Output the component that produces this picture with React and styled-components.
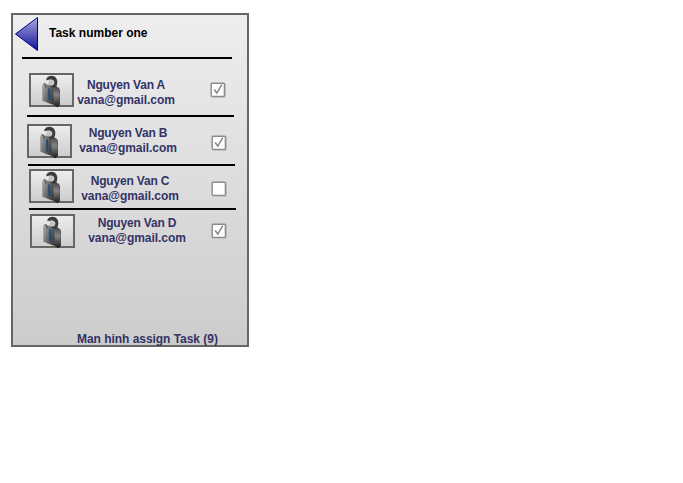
import React from "react";
import styled, { createGlobalStyle } from "styled-components";

const GlobalStyle = createGlobalStyle`
  body { margin: 0; background: #fff; }
  * { box-sizing: border-box; }
`;

const Panel = styled.main`
  display: flex;
  flex-direction: column;
  width: 238px;
  height: 334px;
  margin: 13px 0 0 11px;
  border: 2px solid #666;
  background: linear-gradient(#eee, #ccc);
  font: bold 12px/15px "Liberation Sans", Arial, sans-serif;
  color: #333366;
  white-space: nowrap;
`;

const Header = styled.header`
  display: flex;
  width: 210px;
  height: 44px;
  margin-left: 9px;
  border-bottom: 2px solid #000;
`;

const BackButton = styled.button`
  width: 25px;
  height: 36px;
  margin: 1px 0 0 -8px;
  padding: 0;
  border: 0;
  background: none;
  svg { display: block; }
`;

const Title = styled.h1`
  margin: 11px 0 0 10px;
  font: inherit;
  color: #000;
`;

const Row = styled.section`
  display: flex;
  align-items: flex-start;
  width: 207px;
  height: ${(p) => p.$height}px;
  margin-left: ${(p) => p.$indent}px;
  border-bottom: ${(p) => (p.$last ? "0" : "2px solid #000")};
`;

const Avatar = styled.div`
  flex: none;
  width: 45px;
  height: 34px;
  margin: ${(p) => p.$top}px 0 0 ${(p) => p.$left}px;
  svg { display: block; overflow: visible; }
`;

const Contact = styled.div`
  flex: none;
  width: 98px;
  margin: ${(p) => p.$top}px 0 0 ${(p) => p.$left}px;
  text-align: center;
`;

const Name = styled.div`
  letter-spacing: -0.18px;
`;

const Email = styled.div`
  letter-spacing: -0.05px;
`;

const CheckBox = styled.div`
  flex: none;
  width: 16px;
  height: 16px;
  margin: ${(p) => p.$top}px 0 0 ${(p) => p.$left}px;
  svg { display: block; }
`;

const Footer = styled.footer`
  margin: auto 0 -2px 64px;
  letter-spacing: -0.04px;
`;

const people = [
  { name: "Nguyen Van A", indent: 14, height: 58, avatar: [14, 2], text: [19, 3], check: [23, 35], checked: true },
  { name: "Nguyen Van B", indent: 15, height: 49, avatar: [7, -1], text: [9, 7], check: [18, 34], checked: true },
  { name: "Nguyen Van C", indent: 16, height: 44, avatar: [3, 0], text: [8, 7], check: [15, 32], checked: false },
  { name: "Nguyen Van D", indent: 16, height: 45, avatar: [4, 1], text: [6, 13], check: [13, 25], checked: true },
];

function Person({ id }) {
  return (
    <svg width="45" height="34" viewBox="0 0 45 34">
      <defs>
        <linearGradient id={`frame-${id}`} x1="0" y1="0" x2="0" y2="1">
          <stop offset="0" stopColor="#eee" />
          <stop offset="1" stopColor="#ccc" />
        </linearGradient>
        <linearGradient id={`jacket-${id}`} x1="0" y1="0.3" x2="1" y2="0.7">
          <stop offset="0" stopColor="#a2a2a2" />
          <stop offset="0.3" stopColor="#707070" />
          <stop offset="0.6" stopColor="#454545" />
          <stop offset="1" stopColor="#303030" />
        </linearGradient>
        <linearGradient id={`sleeve-${id}`} x1="0" y1="0" x2="0" y2="1">
          <stop offset="0" stopColor="#484848" />
          <stop offset="0.4" stopColor="#858585" />
          <stop offset="1" stopColor="#181818" />
        </linearGradient>
      </defs>
      <rect x="1" y="1" width="43" height="32" fill={`url(#frame-${id})`} stroke="#666" strokeWidth="2" />
      <path d="M20 7 L24 7.5 L25 11 L23 14 L19 13Z" fill="#c2c2c2" />
      <path d="M13 13.5 L14 10.5 L16 10 L18 11.5 L20.5 12.3 L26 13 L30 15 L31 18 L31 31.5 L28.5 34.3 L25 32 L19 30 L13 27.5Z" fill={`url(#jacket-${id})`} />
      <path d="M24 14 L27 13.5 L30.5 16 L31 31.5 L28.5 34.3 L25 32Z" fill={`url(#sleeve-${id})`} />
      <path d="M17.3 6 C18.5 3.8 20 2.8 22.7 2.8 C26.8 3 29 6.8 28.2 10.5 L27.3 14 L24 15 L21 13.5 C24 13 26 10.8 25.1 8.5 C24 6.2 21 6 17.5 7.2Z" fill="#3b3b3b" />
      <path d="M19.3 15 L21 16 L21.5 26 L20.5 28.2 L19.3 26Z" fill="#174b7b" />
      <path d="M15 10.3 L17.2 12.8 L16.5 14.5" fill="none" stroke="#333" strokeWidth="0.9" />
      <path d="M13.5 15 L13.5 27" stroke="#ababab" strokeWidth="0.7" />
    </svg>
  );
}

function Check({ checked }) {
  return (
    <svg width="16" height="16" viewBox="0 0 16 16">
      <rect x="1.5" y="1.5" width="14" height="14" rx="1" fill="none" stroke="#c2c2c2" />
      <rect x="1.2" y="1.2" width="13.2" height="13.2" rx="0.8" fill="#fff" stroke="#8c8c8c" strokeWidth="1.4" />
      {checked && <path d="M4.2 7.3 L6.8 11.2 L11.8 2.7" fill="none" stroke="#858585" strokeWidth="1.5" />}
    </svg>
  );
}

export default function App() {
  return (
    <>
      <GlobalStyle />
      <Panel>
        <Header>
          <BackButton aria-label="Back">
            <svg width="25" height="36" viewBox="0 0 25 36">
              <defs>
                <linearGradient id="back" x1="0" y1="0" x2="0" y2="1">
                  <stop offset="0" stopColor="#aaaadd" />
                  <stop offset="1" stopColor="#111199" />
                </linearGradient>
              </defs>
              <path d="M23.5 1.5 L1.5 18 L23.5 34.5Z" fill="url(#back)" stroke="#000099" />
            </svg>
          </BackButton>
          <Title>Task number one</Title>
        </Header>
        {people.map((p, i) => (
          <Row key={p.name} $indent={p.indent} $height={p.height} $last={i === people.length - 1}>
            <Avatar $top={p.avatar[0]} $left={p.avatar[1]}>
              <Person id={i} />
            </Avatar>
            <Contact $top={p.text[0]} $left={p.text[1]}>
              <Name>{p.name}</Name>
              <Email>vana@gmail.com</Email>
            </Contact>
            <CheckBox $top={p.check[0]} $left={p.check[1]} role="checkbox" aria-checked={p.checked}>
              <Check checked={p.checked} />
            </CheckBox>
          </Row>
        ))}
        <Footer>Man hinh assign Task (9)</Footer>
      </Panel>
    </>
  );
}
